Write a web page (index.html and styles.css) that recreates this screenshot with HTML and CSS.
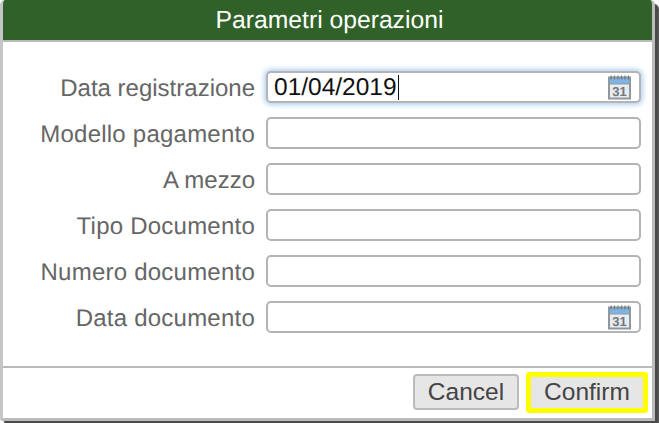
FILE: index.html
```html
<!DOCTYPE html>
<html lang="it">

<head>
    <meta charset="UTF-8">
    <meta name="viewport" content="width=device-width, initial-scale=1.0">
    <title>Parametri operazioni</title>
    <link rel="stylesheet" href="styles.css">
</head>

<body>

    <div class="finestra">
        <div class="titolo">Parametri operazioni</div>

        <form class="campi">
            <label class="riga">
                <span class="etichetta">Data registrazione</span>
                <span class="campo attivo">
                    <span class="valore">01/04/2019</span><span class="cursore"></span>
                    <svg class="icona" viewBox="0 0 24 24">
                        <rect x="0" y="1" width="23" height="23" fill="#8f989f"/>
                        <rect x="2" y="3" width="19" height="5" fill="#7db4e6"/>
                        <path d="M3 0v4M6.500 0v4M10 0v4M13.500 0v4M17 0v4M20.500 0v4" stroke="#6d7880" stroke-width="1.200"/>
                        <rect x="2" y="9" width="19" height="13" fill="#e9ebec"/>
                        <text x="11.500" y="20.500" class="cal-num">31</text>
                    </svg>
                </span>
            </label>
            <label class="riga">
                <span class="etichetta largo">Modello pagamento</span>
                <span class="campo"></span>
            </label>
            <label class="riga">
                <span class="etichetta">A mezzo</span>
                <span class="campo"></span>
            </label>
            <label class="riga">
                <span class="etichetta largo">Tipo Documento</span>
                <span class="campo"></span>
            </label>
            <label class="riga">
                <span class="etichetta largo">Numero documento</span>
                <span class="campo"></span>
            </label>
            <label class="riga">
                <span class="etichetta largo">Data documento</span>
                <span class="campo">
                    <svg class="icona" viewBox="0 0 24 24">
                        <rect x="0" y="1" width="23" height="23" fill="#8f989f"/>
                        <rect x="2" y="3" width="19" height="5" fill="#7db4e6"/>
                        <path d="M3 0v4M6.500 0v4M10 0v4M13.500 0v4M17 0v4M20.500 0v4" stroke="#6d7880" stroke-width="1.200"/>
                        <rect x="2" y="9" width="19" height="13" fill="#e9ebec"/>
                        <text x="11.500" y="20.500" class="cal-num">31</text>
                    </svg>
                </span>
            </label>
        </form>

        <div class="azioni">
            <button type="button" class="bottone">Cancel</button>
            <button type="button" class="bottone conferma">Confirm</button>
        </div>
    </div>

</body>

</html>
```

FILE: styles.css
```css
html,
body {
    margin: 0;
    height: 100%;
    background-color: white;
}

body {
    width: 659px;
    height: 423px;
    overflow: hidden;
    font-family: "Liberation Sans", Arial, sans-serif;
    text-rendering: geometricPrecision;
}

.finestra {
    box-sizing: border-box;
    width: 655px;
    height: 421px;
    display: flex;
    flex-direction: column;
    background-color: white;
    border-left: 3px solid #c4c6c8;
    border-right: 3px solid #bbb;
    border-bottom: 3px solid #bbb;
    border-radius: 5px 5px 0 3px;
    box-shadow: 4px 4px 1px #4a4a4a;
    overflow: hidden;
}

.titolo {
    box-sizing: border-box;
    height: 40px;
    line-height: 42px;
    padding-left: 4px;
    flex-shrink: 0;
    text-align: center;
    font-size: 24.700px;
    color: white;
    background-color: #306128;
}

.campi {
    flex: 1;
    display: flex;
    flex-direction: column;
    gap: 14px;
    padding-top: 29px;
    border-top: 2px solid #bbb;
}

.riga {
    display: flex;
    align-items: center;
    height: 32px;
}

.etichetta {
    width: 252px;
    padding-top: 4px;
    text-align: right;
    font-size: 24px;
    color: #666;
    white-space: nowrap;
}

.largo {
    letter-spacing: 0.23px;
}

.campo {
    box-sizing: border-box;
    width: 375px;
    height: 32px;
    margin-left: 11px;
    padding: 0 6px;
    display: flex;
    align-items: center;
    background-color: white;
    border: 2px solid #b4b4b4;
    border-radius: 5px;
}

.attivo {
    box-shadow: 0 0 5px 2px #b4d2f0;
}

.valore {
    padding-top: 1px;
    font-size: 24.500px;
    color: #111;
}

.cursore {
    width: 1px;
    height: 25px;
    margin-left: 1px;
    background-color: #111;
}

.icona {
    width: 24px;
    height: 25px;
    margin-left: auto;
    margin-right: 1px;
}

.cal-num {
    font-size: 13px;
    font-weight: bold;
    fill: #6d7880;
    text-anchor: middle;
}

.azioni {
    height: 52px;
    flex-shrink: 0;
    box-sizing: border-box;
    display: flex;
    justify-content: flex-end;
    align-items: center;
    gap: 7px;
    padding: 0 4px 2px 0;
    border-top: 2px solid #bbb;
}

.bottone {
    box-sizing: border-box;
    width: 106px;
    height: 36px;
    padding: 0;
    font-family: inherit;
    font-size: 24.500px;
    color: #444;
    background-color: #e6e6e6;
    border: 2px solid #bbb;
    border-radius: 4px;
}

.conferma {
    width: 122px;
    height: 41px;
    border: 5px solid #ffff00;
    border-radius: 3px;
}
```
